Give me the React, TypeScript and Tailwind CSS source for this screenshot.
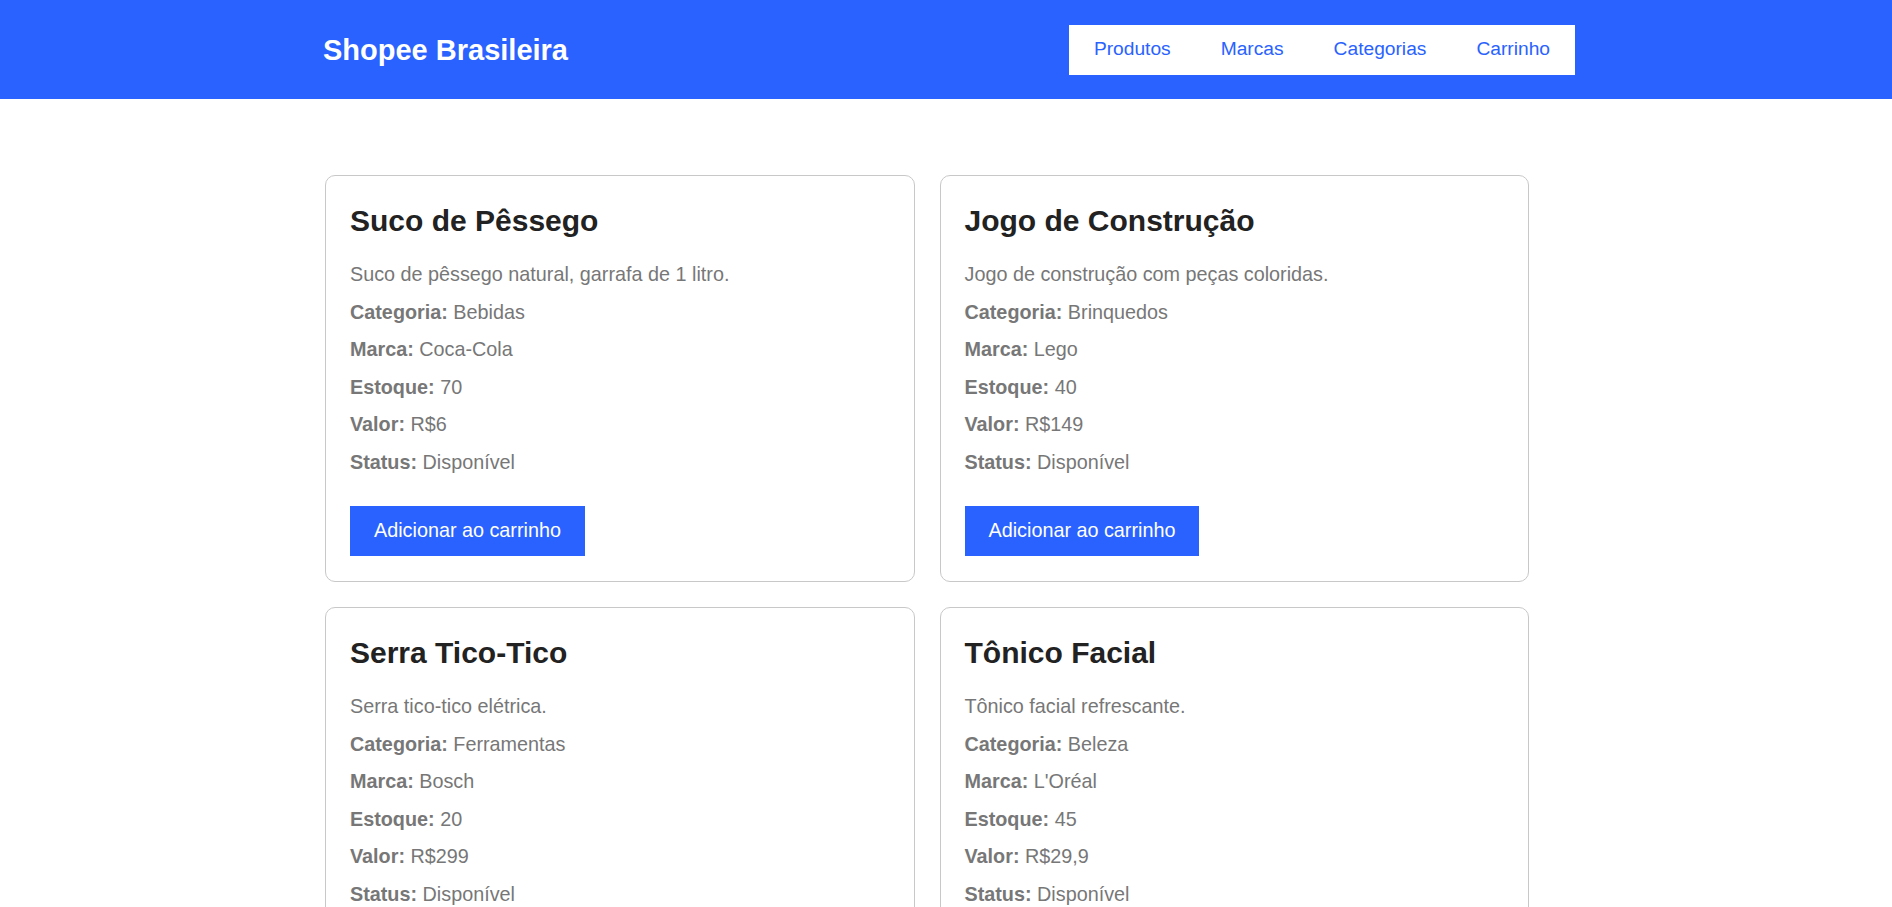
import React from "react";

type Product = {
  name: string;
  description: string;
  category: string;
  brand: string;
  stock: number;
  price: string;
  status: string;
};

const products: Product[] = [
  {
    name: "Suco de Pêssego",
    description: "Suco de pêssego natural, garrafa de 1 litro.",
    category: "Bebidas",
    brand: "Coca-Cola",
    stock: 70,
    price: "R$6",
    status: "Disponível",
  },
  {
    name: "Jogo de Construção",
    description: "Jogo de construção com peças coloridas.",
    category: "Brinquedos",
    brand: "Lego",
    stock: 40,
    price: "R$149",
    status: "Disponível",
  },
  {
    name: "Serra Tico-Tico",
    description: "Serra tico-tico elétrica.",
    category: "Ferramentas",
    brand: "Bosch",
    stock: 20,
    price: "R$299",
    status: "Disponível",
  },
  {
    name: "Tônico Facial",
    description: "Tônico facial refrescante.",
    category: "Beleza",
    brand: "L'Oréal",
    stock: 45,
    price: "R$29,9",
    status: "Disponível",
  },
];

const navLinks = ["Produtos", "Marcas", "Categorias", "Carrinho"];

function Field({ label, value }: { label: string; value: React.ReactNode }) {
  return (
    <p className="text-[19.8px] leading-[37.5px] text-[#777]">
      <strong className="font-bold">{label}:</strong> {value}
    </p>
  );
}

function ProductCard({ product }: { product: Product }) {
  return (
    <div className="rounded-[10px] border border-[#c8c8c8] bg-white px-[24px] pt-[28px] pb-[25px]">
      <h2 className="mb-[18px] text-[30px] font-bold leading-[34px] text-[#222]">
        {product.name}
      </h2>
      <p className="text-[19.8px] leading-[37.5px] text-[#777]">{product.description}</p>
      <Field label="Categoria" value={product.category} />
      <Field label="Marca" value={product.brand} />
      <Field label="Estoque" value={product.stock} />
      <Field label="Valor" value={product.price} />
      <Field label="Status" value={product.status} />
      <button
        type="button"
        className="mt-[25px] h-[50px] bg-[#2962ff] px-[24px] text-[19.8px] text-white"
      >
        Adicionar ao carrinho
      </button>
    </div>
  );
}

export default function App() {
  return (
    <div className="min-h-screen bg-white font-['Liberation_Sans',Arial,sans-serif]">
      <header className="flex h-[99px] items-center justify-between bg-[#2962ff] pl-[323px] pr-[317px]">
        <h1 className="mt-[3px] text-[29px] font-bold text-white">Shopee Brasileira</h1>
        <nav className="flex h-[50px] bg-white">
          {navLinks.map((link) => (
            <a
              key={link}
              href="#"
              className="px-[25px] text-[19.2px] leading-[48px] text-[#2962ff]"
            >
              {link}
            </a>
          ))}
        </nav>
      </header>

      <main className="pt-[76px] pb-[40px] pl-[325px]">
        <div className="grid w-[1204px] grid-cols-2 gap-[25px]">
          {products.map((product) => (
            <ProductCard key={product.name} product={product} />
          ))}
        </div>
      </main>
    </div>
  );
}
